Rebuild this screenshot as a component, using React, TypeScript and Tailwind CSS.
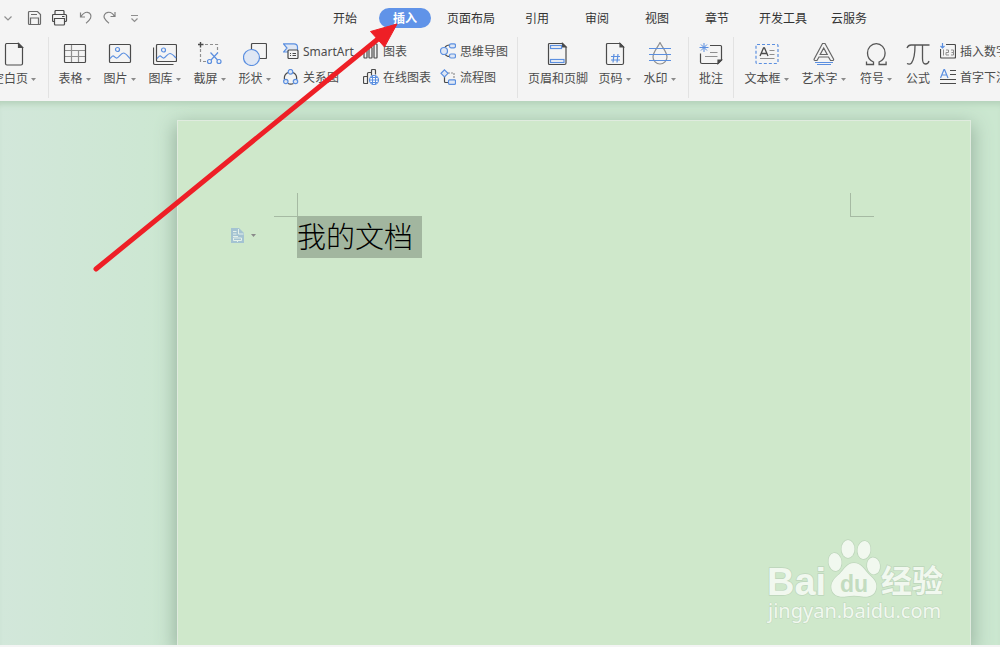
import type { ReactNode } from 'react'

const tabs = ['开始', '插入', '页面布局', '引用', '审阅', '视图', '章节', '开发工具', '云服务']

const dark = '#4a4a4a'
const blue = '#5b8fe0'
const gray = '#8f8f8f'
const pale = '#dfe7f4'

function Icon({ size = 24, children }: { size?: number; children: ReactNode }) {
  return (
    <svg
      width={size}
      height={size}
      viewBox={`0 0 ${size} ${size}`}
      fill="none"
      stroke={dark}
      strokeWidth="1.2"
      className="shrink-0"
      aria-hidden="true"
    >
      {children}
    </svg>
  )
}

function Caret() {
  return (
    <svg width="5" height="3" viewBox="0 0 5 3" className="shrink-0" aria-hidden="true">
      <path d="M0 0h5L2.500 3z" fill="#8a8a8a" />
    </svg>
  )
}

type ToolProps = { label: string; width?: string; menu?: boolean; children: ReactNode }

function Tool({ label, width = 'w-[45px]', menu = false, children }: ToolProps) {
  return (
    <button type="button" className={`flex shrink-0 flex-col items-center gap-[5px] pt-[5px] pb-[11px] ${width}`}>
      <Icon>{children}</Icon>
      <span className="flex items-center gap-[3px] leading-4 whitespace-nowrap">
        {label}
        {menu && <Caret />}
      </span>
    </button>
  )
}

function SmallTool({ label, children }: { label: string; children: ReactNode }) {
  return (
    <button type="button" className="flex h-[26px] items-center gap-1 whitespace-nowrap">
      <Icon size={16}>{children}</Icon>
      <span className="pt-0.5">{label}</span>
    </button>
  )
}

function Divider() {
  return <div className="w-px shrink-0 bg-[#e2e2e2]" />
}

function QuickAccess() {
  return (
    <div className="flex w-[315px] shrink-0 items-center pl-1">
      <button type="button" aria-label="更多" className="w-[23px]">
        <svg width="8" height="16" fill="none" stroke={gray} strokeWidth="1.2">
          <path d="M.5 6.500l3.500 3.500 3.500-3.500" />
        </svg>
      </button>
      <button type="button" aria-label="保存" className="w-[25px]">
        <Icon size={16}>
          <path d="M2.500 1.500h8l3 3v9a1 1 0 0 1-1 1h-10a1 1 0 0 1-1-1v-11a1 1 0 0 1 1-1z" stroke="#6a6a6a" />
          <path d="M4 4.500h6M3.500 14v-6h8v6" stroke="#6a6a6a" />
        </Icon>
      </button>
      <button type="button" aria-label="打印" className="w-[27px]">
        <Icon size={16}>
          <path d="M3 4.500v-3a1 1 0 0 1 1-1h7a1 1 0 0 1 1 1v3M2.500 11.500h-1a1 1 0 0 1-1-1v-5a1 1 0 0 1 1-1h12a1 1 0 0 1 1 1v5a1 1 0 0 1-1 1h-1M2.500 8.500h10v5.500a1 1 0 0 1-1 1h-8a1 1 0 0 1-1-1z" />
          <path d="M10 6.500h2.500" strokeWidth="1" />
        </Icon>
      </button>
      <button type="button" aria-label="撤销" className="w-[24px]">
        <Icon size={16}>
          <path d="M1.500 2.500v4.500h4.500M2 6.500c2-3 4-4.500 6.500-4.200 3 .4 4.200 3.500 3 6-.8 1.700-2.500 3.200-4.500 5" stroke="#808080" />
        </Icon>
      </button>
      <button type="button" aria-label="恢复" className="w-[27px]">
        <Icon size={16}>
          <path d="M12 2v4.500h-4.500M11.500 6.500c-1.500-3-4-4.500-6.500-4.200-3 .4-4.800 3.500-3.500 6 .8 1.700 2.500 3.200 4.500 5" stroke="#808080" />
        </Icon>
      </button>
      <button type="button" aria-label="自定义快速访问工具栏">
        <svg width="9" height="16" fill="none" stroke={gray} strokeWidth="1.200">
          <path d="M1 5.500h7M1.500 8.500l3 3 3-3" />
        </svg>
      </button>
    </div>
  )
}

function Ribbon() {
  return (
    <div className="flex overflow-hidden pt-px pb-[3px] text-[#4c4c4c]">
      <div className="-ml-3 flex shrink-0 pr-2">
        <Tool label="空白页" width="w-[52px]" menu>
          <path d="M4.500 1.500h12l4 4v16a1.500 1.500 0 0 1-1.500 1.500h-14a1.500 1.500 0 0 1-1.500-1.500v-18.500a1.500 1.500 0 0 1 1-1.500z" />
          <path d="M16.500 1.500v4h4z" fill={dark} />
        </Tool>
      </div>
      <Divider />
      <div className="flex shrink-0 pr-2 pl-[3px]">
        <Tool label="表格" menu>
          <path d="M2 8.500h20M2 14.500h20M8.500 3v17M15.500 8.500v12" stroke={gray} />
          <rect x="1.500" y="2.500" width="21" height="18" rx="1" />
        </Tool>
        <Tool label="图片" menu>
          <rect x="1.500" y="2.500" width="21" height="18" rx="1" />
          <circle cx="9.500" cy="7.500" r="2" stroke={blue} />
          <path d="M2 16.500c1.500-1.500 2.500-3 3.500-2.500 1.500.8 2.200 2.500 3.500 2 2-.8 4-5 6.500-5 2.300 0 4 3 6.500 5.500" stroke={blue} />
        </Tool>
        <Tool label="图库" menu>
          <path d="M.5 5.500v15.500a1.500 1.500 0 0 0 1.500 1.500h18.500" />
          <rect x="3.500" y="2.500" width="20" height="17" rx="1" />
          <circle cx="10.500" cy="8" r="2" stroke={blue} />
          <path d="M4 16.500c1.500-1.500 2.500-3 3.500-2.500 1.500.8 2.200 2.500 3.500 2 2-.8 3.500-4.500 6-4.500 2 0 4 2.500 6 4.500" stroke={blue} />
        </Tool>
        <Tool label="截屏" menu>
          <path d="M7 2.500h12.500v8M2.500 7v12.500h7" stroke={gray} strokeDasharray="3 2" />
          <path d="M2.500 0v5.500M0 2.500h5.500" strokeWidth="1.400" />
          <path d="M12.500 10.500l7 7.500M20 10.500l-7 7.500" stroke={blue} />
          <circle cx="11.500" cy="19.500" r="2" stroke={blue} />
          <circle cx="21" cy="19.500" r="2" stroke={blue} />
        </Tool>
        <Tool label="形状" menu>
          <rect x="8.500" y="1.500" width="15" height="15" rx="1" />
          <circle cx="8.500" cy="15.500" r="8" fill={pale} stroke={blue} />
        </Tool>
        <div className="flex gap-2 pt-px pl-[6px]">
          <div className="w-[72px]">
            <SmallTool label="SmartArt">
              <path d="M.5.800h10.500c2 0 3.500 1.500 3.500 3.200v3.500h-9v1.500h-5l3.500-4z" fill={pale} stroke={blue} />
              <rect x="5" y="7" width="10" height="8.500" rx="1" fill="#f4f4f4" />
              <path d="M7 10.500h1M9.500 10.500h3.500M7 12.500h1M9.500 12.500h3.500" strokeWidth="1" />
            </SmallTool>
            <SmallTool label="关系图">
              <path d="M5 3.500a6.500 6.500 0 0 0-3.500 7M10 3.500a6.500 6.500 0 0 1 3.500 7M5 14.500c2 1 3.500 1 5.500 0" />
              <circle cx="7.500" cy="2.800" r="2.300" fill={pale} stroke={blue} />
              <circle cx="2.800" cy="12.500" r="2.200" fill={pale} stroke={blue} />
              <circle cx="12.500" cy="12.500" r="2.200" fill={pale} stroke={blue} />
            </SmallTool>
          </div>
          <div className="w-[69px]">
            <SmallTool label="图表">
              <rect x="1" y="7.500" width="3" height="7.500" rx=".5" />
              <rect x="6" y="4.500" width="3" height="10.500" rx=".5" />
              <rect x="11" y="1" width="3" height="14" rx=".5" />
            </SmallTool>
            <SmallTool label="在线图表">
              <path d="M5 14.500h-3.500a1 1 0 0 1-1-1v-5a1 1 0 0 1 1-1h3v-3a1 1 0 0 1 1-1h3v-2a1 1 0 0 1 1-1h2a1 1 0 0 1 1 1v4M4.500 7.500v7M8.500 3.500v3" />
              <circle cx="11" cy="11" r="4.500" fill="#fff" stroke={blue} />
              <path d="M6.500 11h9M7.500 8.500h7M7.500 13.500h7M9.500 6.500v9M12.500 6.500v9" stroke={blue} strokeWidth="1" />
            </SmallTool>
          </div>
          <div className="w-[69px]">
            <SmallTool label="思维导图">
              <path d="M5 4.500c1-2 2.500-2.500 4.500-2.500M5 11c1 2 2.500 2.500 4.500 2.500" />
              <circle cx="4" cy="8" r="3.500" fill={pale} stroke={blue} />
              <rect x="9.500" y=".8" width="6" height="4" rx="1.500" fill={pale} stroke={blue} />
              <rect x="9.500" y="11" width="6" height="4" rx="1.500" fill={pale} stroke={blue} />
            </SmallTool>
            <SmallTool label="流程图">
              <path d="M4.500 7.500v5a1 1 0 0 0 1 1h3" />
              <path d="M8 4h6v6.500" strokeDasharray="2 1" stroke={gray} />
              <path d="M4.500.800l3.500 3.500-3.500 3.500-3.500-3.500z" fill={pale} stroke={blue} />
              <rect x="8.500" y="10.800" width="7" height="4.500" rx="1" fill={pale} stroke={blue} />
            </SmallTool>
          </div>
        </div>
      </div>
      <Divider />
      <div className="flex shrink-0 px-[6px]">
        <Tool label="页眉和页脚" width="w-[68px]">
          <path d="M3.500 1.500h13l3.500 3.500v16a1.500 1.500 0 0 1-1.500 1.500h-15a1 1 0 0 1-1-1v-19a1 1 0 0 1 1-1z" />
          <path d="M16.500 1.500v3.500h3.500z" fill={dark} />
          <rect x="4.500" y="3.500" width="11" height="3" stroke={blue} />
          <rect x="4.500" y="17.500" width="13.500" height="3" stroke={blue} />
        </Tool>
        <Tool label="页码" menu>
          <path d="M4.500 1.500h12.500l3.500 3.500v16a1.500 1.500 0 0 1-1.500 1.500h-14a1.500 1.500 0 0 1-1.500-1.500v-18.500a1 1 0 0 1 1-1z" />
          <path d="M17 1.500v3.500h3.500z" fill={dark} />
          <path d="M8 14.500h9M8 18h9M11 12l-1 8.500M15 12l-1 8.500" stroke={blue} />
        </Tool>
        <Tool label="水印" menu>
          <path d="M12 .5c-2 4.500-7 9.500-7 14.500a7 7 0 0 0 14 0c0-5-5-10-7-14.500z" stroke={gray} />
          <path d="M1 6.500h22M1 12.500h22M1 18.500h22" stroke={blue} />
        </Tool>
      </div>
      <Divider />
      <Tool label="批注" width="w-[44px]">
        <path d="M11 3.500h10.500a1 1 0 0 1 1 1v13.500l-3.500 3.500h-16a1.500 1.500 0 0 1-1.500-1.500v-8.500" />
        <path d="M19 21.500v-3.500h3.500z" fill={dark} />
        <path d="M11 10.500h7.500M6 14.500h12.500" stroke={gray} />
        <path d="M5 1v9M.5 5.500h9M2 2.500l6 6M8 2.500l-6 6" stroke={blue} strokeWidth="1" />
      </Tool>
      <Divider />
      <div className="flex shrink-0 pl-1">
        <Tool label="文本框" width="w-[57px]" menu>
          <rect x="1" y="2.500" width="22" height="19" rx="1" stroke={blue} strokeDasharray="3 2" />
          <path d="M5 14l3.500-8h1l3.500 8M6.500 11.500h5" strokeWidth="1.300" />
          <path d="M14.500 8.500h5M14.500 12.500h5M5 16.500h14.500" stroke={gray} />
        </Tool>
        <Tool label="艺术字" width="w-[57px]" menu>
          <path
            d="M10.500 1.500h2.500l8.500 15.500c.5 1-.3 1.500-1 1.500h-2l-2-3.500h-9.500l-2 3.500h-2c-.8 0-1.200-.7-.8-1.500zM11.700 6l-3.500 6.500h7z"
            stroke="#666"
          />
          <path d="M3 20.500h18M5 22.500h14" stroke={blue} />
        </Tool>
        <Tool label="符号" width="w-12" menu>
          <path
            d="M2.500 19.500v3h7v-2.500c-3.500-1.500-6-4.500-6-9a8.800 9.300 0 0 1 17.600 0c0 4.500-2.500 7.500-6 9v2.500h7v-3"
            stroke="#555"
            strokeWidth="1.300"
          />
        </Tool>
        <Tool label="公式" width="w-9">
          <path
            d="M1 6c.8-2 2-3 4-3h18.500M9 3.500c0 8-1 14-3.500 17.500-1 1-2.500 1.500-4.500.5M16.500 3.500v13c0 4 1 5.500 3 5.500 1.800 0 3-1 3.500-3"
            stroke="#555"
            strokeWidth="1.300"
          />
        </Tool>
        <div className="w-[100px] pt-px pl-1">
          <SmallTool label="插入数字">
            <path d="M6 1.500h8.500a1 1 0 0 1 1 1v11.500a1 1 0 0 1-1 1h-13a1 1 0 0 1-1-1v-8" />
            <path d="M2.500 0v5M.5 3l2 2 2-2" stroke={blue} />
            <path d="M3.500 6.500v6M6 7h2.500v2.500h-2.500v2.500h3M11 7h2.500v5h-2.500M11.500 9.500h2" stroke={gray} strokeWidth="1" />
          </SmallTool>
          <SmallTool label="首字下沉">
            <path d="M.5 9l3.500-8.500h.5l3.500 8.500M2 6h5" stroke={blue} />
            <path d="M10 1.500h6M10 5.500h6M0 10.500h16M0 14.500h16" />
          </SmallTool>
        </div>
      </div>
    </div>
  )
}

function Watermark() {
  return (
    <svg
      width="185"
      height="90"
      viewBox="0 0 185 90"
      className="absolute right-5 bottom-5"
      fill="#f1f8ef"
      stroke="#bdd5bb"
      strokeWidth="1.400"
      paintOrder="stroke"
    >
      <text x="2" y="60" fontSize="38" fontWeight="bold" fontFamily="Liberation Sans, sans-serif">
        Bai
      </text>
      <ellipse cx="70" cy="27" rx="6.500" ry="9" transform="rotate(-8 70 27)" />
      <ellipse cx="83" cy="14" rx="6.500" ry="9" />
      <ellipse cx="99" cy="15" rx="6.500" ry="9" transform="rotate(8 99 15)" />
      <ellipse cx="108.500" cy="31" rx="6.500" ry="8.500" transform="rotate(-8 108 31)" />
      <path d="M89 28c7 0 10 6 15 11.500 6 5.500 8.500 9 7 14.500-1.500 7-8 8.500-14 7.500-5-1-11-1-16 0-7 1-13-1-14.500-7.500-1-6 2-10 8-15 5-5 7.500-11 14.500-11z" />
      <text x="75" y="57" fontSize="23" fontWeight="bold" fontFamily="Liberation Sans, sans-serif" fill="#c3dcc0" stroke="none">
        du
      </text>
      <text x="116" y="57" fontSize="31" fontWeight="bold" fontFamily="Noto Sans CJK SC, sans-serif">
        经验
      </text>
      <text x="3" y="83" fontSize="20" fontFamily="Noto Sans, sans-serif" strokeWidth="1">
        jingyan.baidu.com
      </text>
    </svg>
  )
}

function Arrow() {
  return (
    <svg width="400" height="280" viewBox="0 0 400 280" className="pointer-events-none absolute top-0 left-0" aria-hidden="true">
      <path d="M96 269L378 39" stroke="#ee1f26" strokeWidth="5" strokeLinecap="round" />
      <path d="M397 24l-26.500 7.500 14 15.500z" fill="#ee1f26" stroke="#ee1f26" strokeLinejoin="round" />
    </svg>
  )
}

function App() {
  return (
    <div className="relative flex h-screen flex-col overflow-hidden bg-[#f4f4f4] font-['Noto_Sans','Noto_Sans_CJK_SC',sans-serif] text-[12px] leading-4">
      <header className="shrink-0">
        <div className="flex h-9">
          <QuickAccess />
          <nav className="flex items-center text-[#333]">
            {tabs.map((tab) =>
              tab === '插入' ? (
                <button key={tab} type="button" className="mx-1 h-5 w-[52px] rounded-full bg-[#6093e8] pt-0.5 font-bold text-white">
                  {tab}
                </button>
              ) : (
                <button key={tab} type="button" className="min-w-[60px] px-3 pt-0.5 whitespace-nowrap">
                  {tab}
                </button>
              )
            )}
          </nav>
        </div>
        <Ribbon />
      </header>

      <main className="mb-[2px] flex min-h-0 flex-1 overflow-hidden bg-linear-to-r from-[#d2e7da] to-[#cbe7d0] to-20% pt-[19px] pr-[29px] pl-[177px] shadow-[inset_0_7px_6px_-4px_#b3d0b8]">
        <article className="relative flex-1 border border-b-0 border-[#e0ebdf] bg-[#cfe8cb] pt-[72px] shadow-[0_6px_18px_2px_#98b39f]">
          <div className="flex h-[23px] justify-between px-24">
            <div className="h-6 w-6 border-r border-b border-[#a6baa3]" />
            <div className="h-6 w-6 border-b border-l border-[#a6baa3]" />
          </div>
          <div className="flex">
            <button type="button" aria-label="段落布局" className="flex h-[38px] w-[119px] items-center gap-[7px] pl-[53px]">
              <svg width="13" height="15" viewBox="0 0 13 15" aria-hidden="true">
                <path d="M0 0h8l5 5v10h-13z" fill="#a4c3d2" />
                <path d="M7.500 1v5h5M2 3.500h3.500M2 6h3.500M2 8.500h5M2.500 10h8v2.500h-8zM6.500 12.500v1.500" fill="none" stroke="#e4f1ea" />
              </svg>
              <Caret />
            </button>
            <h1 className="bg-[#a2b69f] pr-[9px] pb-1 font-['Noto_Sans_CJK_SC',sans-serif] text-[29px] leading-[38px] font-light text-black">
              我的文档
            </h1>
          </div>
          <Watermark />
        </article>
      </main>
      <Arrow />
    </div>
  )
}

export default App
